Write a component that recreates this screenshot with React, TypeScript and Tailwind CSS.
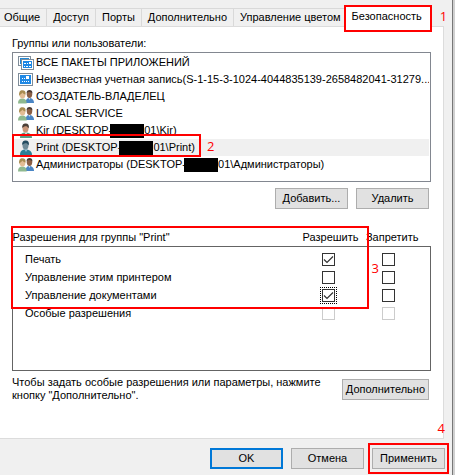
import type { ReactNode } from 'react';
import clsx from 'clsx';

const tabs = ['Общие', 'Доступ', 'Порты', 'Дополнительно', 'Управление цветом'];

type Principal = {
  icon: 'packages' | 'package' | 'group' | 'user';
  name: string;
  tail?: string;
  selected?: boolean;
};

const principals: Principal[] = [
  { icon: 'packages', name: 'ВСЕ ПАКЕТЫ ПРИЛОЖЕНИЙ' },
  { icon: 'package', name: 'Неизвестная учетная запись(S-1-15-3-1024-4044835139-2658482041-31279...' },
  { icon: 'group', name: 'СОЗДАТЕЛЬ-ВЛАДЕЛЕЦ' },
  { icon: 'group', name: 'LOCAL SERVICE' },
  { icon: 'user', name: 'Kir (DESKTOP-', tail: '01\\Kir)' },
  { icon: 'user', name: 'Print (DESKTOP-', tail: '01\\Print)', selected: true },
  { icon: 'group', name: 'Администраторы (DESKTOP-', tail: '01\\Администраторы)' },
];

const permissions = [
  { id: 'print', label: 'Печать', allow: true },
  { id: 'printer', label: 'Управление этим принтером', allow: false },
  { id: 'documents', label: 'Управление документами', allow: true, focused: true },
  { id: 'special', label: 'Особые разрешения', allow: false, disabled: true },
];

const PrincipalIcon = ({ icon, selected }: { icon: Principal['icon']; selected?: boolean }) => {
  if (icon === 'packages') {
    return (
      <svg viewBox="0 0 16 14" className="w-4 h-3.5 shrink-0" shapeRendering="crispEdges">
        <rect x="0.5" y="0.5" width="12" height="9" fill="#fff" stroke="#7f8c99" />
        <rect x="2" y="2" width="9" height="6" fill="#1e88d8" />
        <rect x="3.5" y="3.5" width="12" height="10" fill="#fff" stroke="#7f8c99" />
        <rect x="5" y="5" width="9" height="7" fill="#1e88e5" />
        <path d="M6 7h2v1H6zM9 7h1v1H9zM11 6h2v2h-2zM6 10h1v1H6zM8 10h2v1H8zM11 10h2v1h-2z" fill="#fff" />
      </svg>
    );
  }
  if (icon === 'package') {
    return (
      <svg viewBox="0 0 16 14" className="w-4 h-3.5 shrink-0" shapeRendering="crispEdges">
        <rect x="0.5" y="0.5" width="14" height="12" fill="#fff" stroke="#7f8c99" />
        <rect x="2" y="2" width="11" height="9" fill="#1e88e5" />
        <path d="M4 5h1v1H4zM6 5h1v1H6zM8 3h3v3H8zM4 8h1v1H4zM6 8h1v1H6zM8 8h1v1H8zM10 8h1v1h-1z" fill="#fff" />
      </svg>
    );
  }
  if (icon === 'group') {
    return (
      <svg viewBox="0 0 16 16" className="size-4 shrink-0">
        <path d="M7.500 14c0-3 1.200-5 3.800-5S16 10.500 16 14z" fill="#4a86c5" />
        <path d="M10.300 8.500h2.200l-1 2.600z" fill="#c9dcec" />
        <ellipse cx="11.500" cy="5.300" rx="2.700" ry="3.600" fill="#8a5f45" />
        <path d="M8.600 4.500C8.400 2 9.800 1 11.500 1s3.200 1 2.900 3.600c-1-.6-1.400-1.500-2.600-1.500s-2.100.5-3.200 1.400z" fill="#4a3a33" />
        <path d="M0 14.500c0-3.500 1.400-5 4.300-5s4.400 1.500 4.400 5z" fill="#8fb98f" />
        <ellipse cx="4.500" cy="5.800" rx="2.900" ry="3.800" fill="#e3bd94" />
        <path d="M1.200 7C.7 3 2 1.300 4.400 1.300S8 2.600 7.500 5.500C6 5.300 5 4.600 4.400 3.500 3.500 5 2.500 5.500 2 5.700z" fill="#a88c50" />
      </svg>
    );
  }
  return (
    <svg viewBox="0 0 16 16" className="size-4 shrink-0">
      <path d="M2 15c0-4 2-5.500 5.500-5.500S14 11 14 15z" fill={selected ? '#2c7f96' : '#5a9d86'} />
      <path d="M6.500 9.500h3L8 12z" fill={selected ? '#8fc0d8' : '#dcebe5'} />
      <ellipse cx="7.500" cy="5.500" rx="3" ry="4" fill={selected ? '#6f8b98' : '#c9977a'} />
      <path d="M4.300 5C3.800 1.800 5.500.5 7.800.5S11.400 2 10.800 5.200C9.800 4.800 9.600 3.400 8.300 3.200 6.800 3.100 5.600 3.500 4.300 5z" fill={selected ? '#244c60' : '#4b4038'} />
    </svg>
  );
};

const DialogButton = ({ children, primary }: { children: ReactNode; primary?: boolean }) => (
  <button
    type="button"
    className={clsx(
      'h-[21px] min-w-[73px] px-[3px] bg-[#e1e1e1] flex shrink-0 items-center justify-center whitespace-nowrap',
      primary ? 'border-2 border-[#0078d7]' : 'border border-[#adadad]'
    )}
  >
    {children}
  </button>
);

const Marker = ({ children, className }: { children: ReactNode; className: string }) => (
  <span className={clsx("absolute text-[13px] leading-4 text-[#ff0000] font-['Open_Sans',sans-serif]", className)}>
    {children}
  </span>
);

const Frame = ({ className }: { className: string }) => (
  <span className={clsx('absolute border-2 border-[#ff0000] pointer-events-none', className)} />
);

type CheckBoxProps = { label: string; checked?: boolean; disabled?: boolean; focused?: boolean };

const CheckBox = ({ label, checked, disabled, focused }: CheckBoxProps) => (
  <span className={clsx('relative inline-block size-[13px] align-top', focused && 'outline-1 outline-dotted outline-black outline-offset-1')}>
    <input
      type="checkbox"
      aria-label={label}
      defaultChecked={checked}
      disabled={disabled}
      className={clsx('peer block appearance-none size-[13px] border bg-white', disabled ? 'border-[#cccccc]' : 'border-[#333333]')}
    />
    <svg viewBox="0 0 13 13" className="absolute inset-0 size-[13px] pointer-events-none hidden peer-checked:block">
      <path d="M2 6.500L5 9.500l6-6" fill="none" stroke="#333" strokeWidth="1.200" />
    </svg>
  </span>
);

const App = () => {
  return (
    <div className="flex bg-[#f0f0f0] text-black text-[11px] leading-[13px] font-['Liberation_Sans',Arial,sans-serif]">
      <div className="flex-1 min-w-0">
        {/* Tabs */}
        <div role="tablist" className="flex items-end h-[26px] whitespace-nowrap">
          {tabs.map((tab) => (
            <button key={tab} type="button" role="tab" className="h-[18px] px-1.5 first:pl-1 border-t border-r border-[#d9d9d9] last-of-type:pr-[3px] last-of-type:border-r-0">
              {tab}
            </button>
          ))}
          <div className="relative h-5 z-10">
            <button type="button" role="tab" aria-selected="true" className="h-[21px] pl-2 pr-2.5 bg-white">
              Безопасность
            </button>
            <Frame className="inset-x-0 -top-px h-[27px]" />
            <Marker className="left-full ml-2 top-0.5">1</Marker>
          </div>
        </div>

        {/* Security page */}
        <div className="relative mr-2 px-3 pt-[10px] h-[413px] bg-white border border-l-0 border-[#dcdcdc]">
          <div className="h-[15px]">Группы или пользователи:</div>
          <div className="relative">
            <ul className="h-[130px] p-px border border-[#828790]">
              {principals.map((p) => (
                <li key={p.name} className={clsx('flex items-center h-[17px] pl-1 gap-0.5 whitespace-nowrap overflow-hidden', p.selected && 'bg-[#f0f0f0]')}>
                  <PrincipalIcon icon={p.icon} selected={p.selected} />
                  <span className="flex items-center">
                    {p.name}
                    {p.tail && <span className="w-[34px] h-3.5 -ml-0.5 bg-black" />}
                    {p.tail}
                  </span>
                </li>
              ))}
            </ul>
            <Frame className="left-0 top-[82px] w-[189px] h-[23px]" />
            <Marker className="left-[195px] top-[86px]">2</Marker>
          </div>
          <div className="flex justify-end gap-2 mt-1.5 pr-0.5">
            <DialogButton>Добавить...</DialogButton>
            <DialogButton>Удалить</DialogButton>
          </div>

          {/* Permissions */}
          <div className="relative mt-[21px]">
            <table className="w-full border-collapse">
              <thead>
                <tr className="h-4">
                  <th className="p-0 text-left font-normal">Разрешения для группы "Print"</th>
                  <th className="p-0 w-[60px] text-right font-normal">Разрешить</th>
                  <th className="p-0 w-[60px] text-right font-normal">Запретить</th>
                  <th className="p-0 w-3" />
                </tr>
              </thead>
              <tbody className="border border-[#646464]">
                <tr className="h-1"><td colSpan={4} className="p-0" /></tr>
                {permissions.map((p) => (
                  <tr key={p.id} className="h-[18px]">
                    <th className="p-0 pl-3 text-left font-normal">{p.label}</th>
                    <td className="p-0 text-center">
                      <CheckBox label={`${p.label}: Разрешить`} checked={p.allow} disabled={p.disabled} focused={p.focused} />
                    </td>
                    <td className="p-0 text-center">
                      <CheckBox label={`${p.label}: Запретить`} disabled={p.disabled} />
                    </td>
                    <td className="p-0" />
                  </tr>
                ))}
                <tr className="h-12"><td colSpan={4} className="p-0" /></tr>
              </tbody>
            </table>
            <Frame className="-left-px right-[62px] -top-1 h-[83px]" />
            <Marker className="right-[52px] top-[30px]">3</Marker>
          </div>

          <div className="flex justify-between mt-2 pr-0.5">
            <p className="-mt-[3px] whitespace-nowrap">
              Чтобы задать особые разрешения или параметры, нажмите
              <br />
              кнопку "Дополнительно".
            </p>
            <DialogButton>Дополнительно</DialogButton>
          </div>
          <Marker className="-right-0.5 bottom-0.5">4</Marker>
        </div>

        {/* Footer */}
        <div className="flex justify-end gap-2 pt-[9px] pb-1.5 pr-[7px]">
          <DialogButton primary>OK</DialogButton>
          <DialogButton>Отмена</DialogButton>
          <div className="relative">
            <DialogButton>Применить</DialogButton>
            <Frame className="-inset-x-1 -inset-y-[5px]" />
          </div>
        </div>
      </div>
      <div className="w-[3px] bg-[#d0d0d0] border-l border-[#777777]" />
    </div>
  );
};

export default App;
